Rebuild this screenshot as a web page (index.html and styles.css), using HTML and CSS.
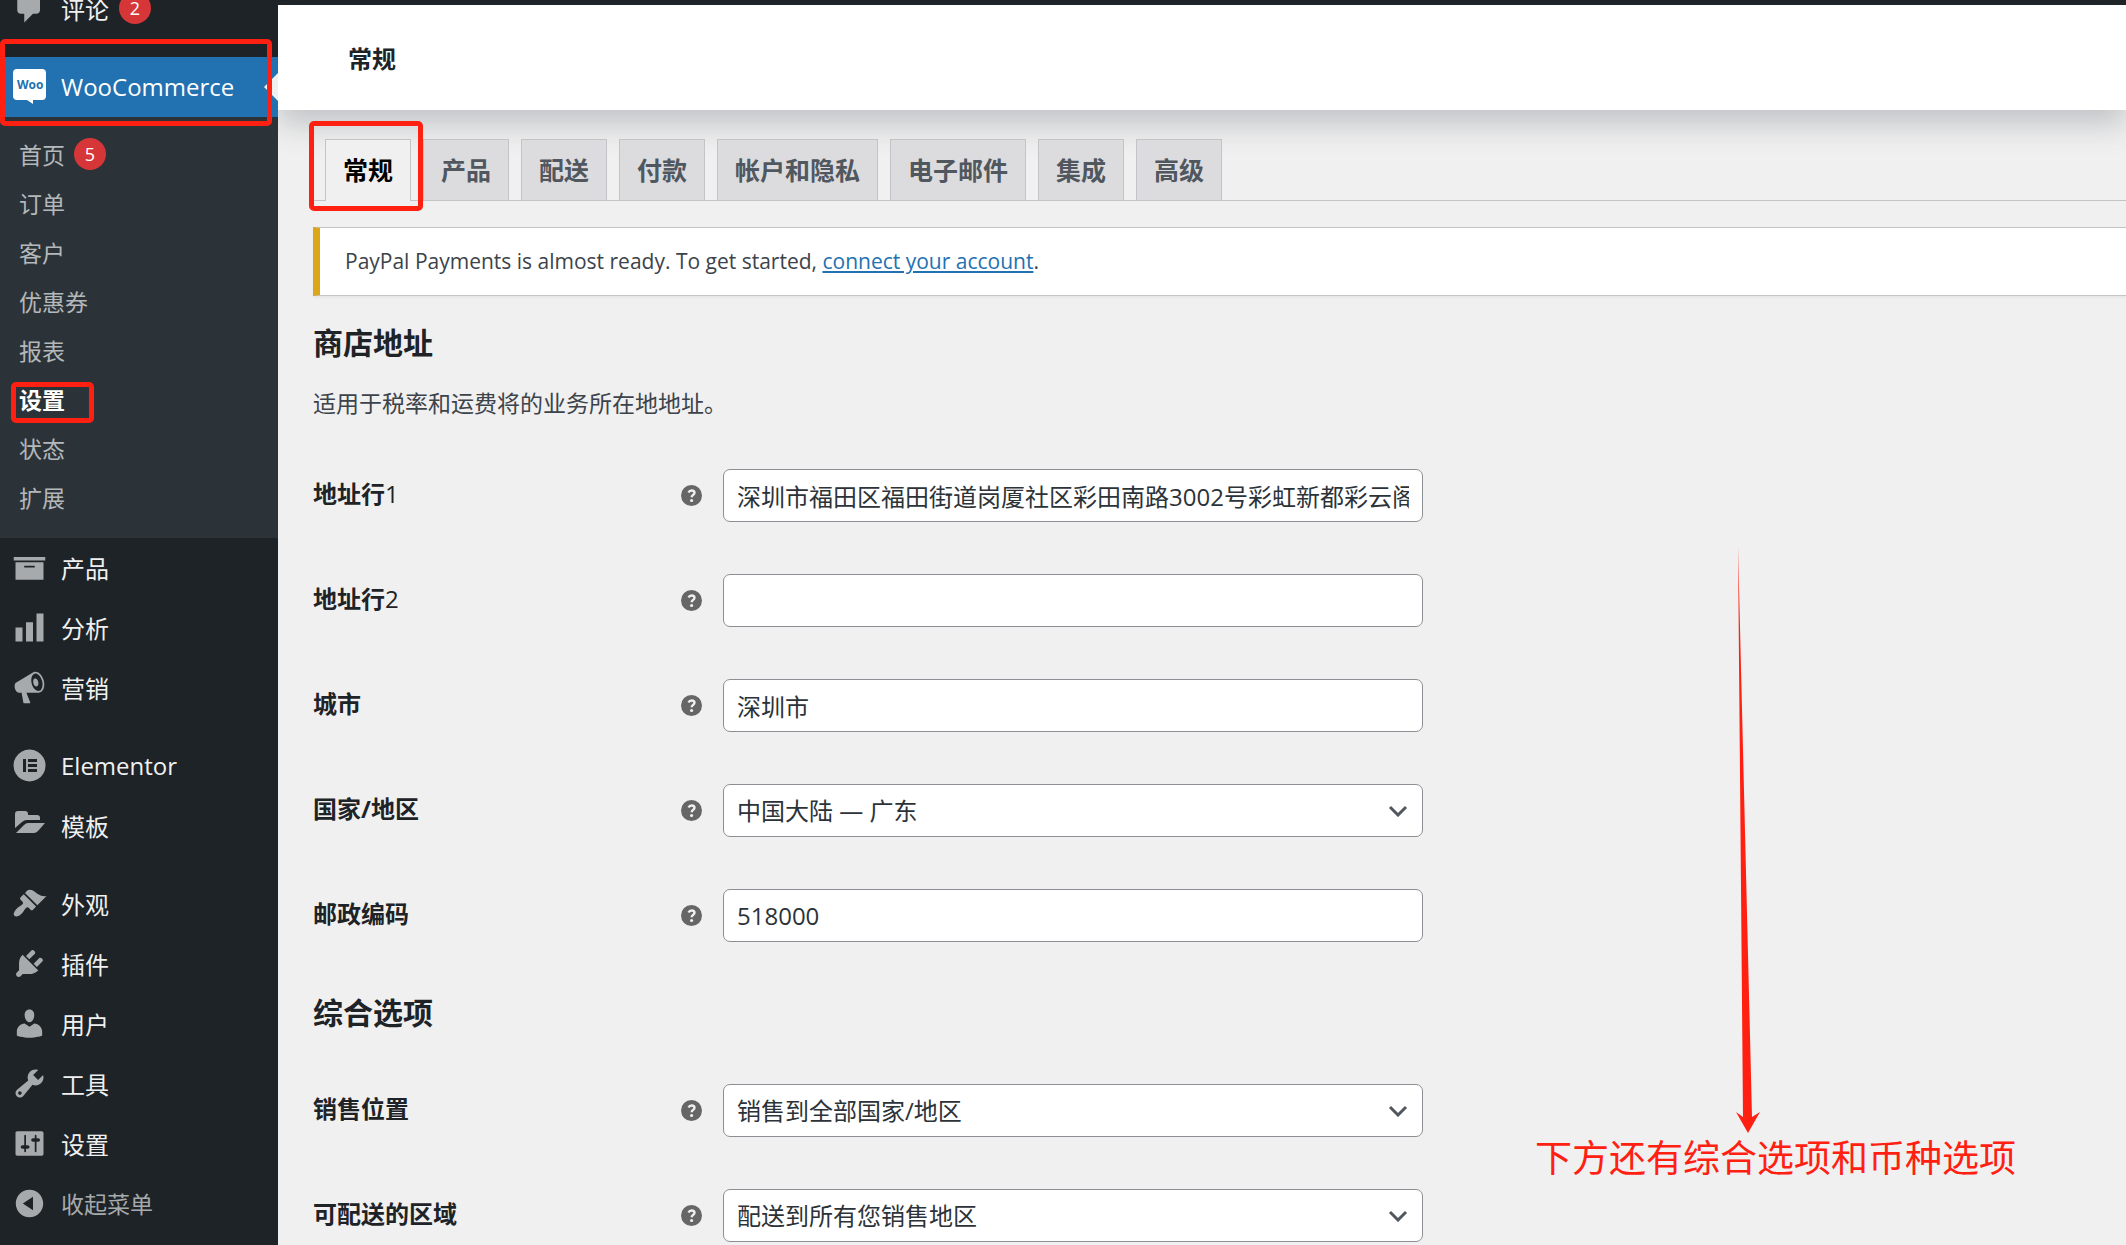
FILE: index.html
```html
<!DOCTYPE html>
<html lang="zh-CN">
<head>
  <meta charset="UTF-8" />
  <title>WooCommerce 设置</title>
  <link rel="stylesheet" href="styles.css">
</head>
<body>
  <nav class="sidebar">
    <ul class="menu">
      <li>
        <a href="#" class="menu-link">
          <svg class="icon" viewBox="0 0 20 20"><path d="M5 2h9q.82 0 1.41.59T16 4v7q0 .82-.59 1.41T14 13h-2l-5 5v-5H5q-.82 0-1.41-.59T3 11V4q0-.82.59-1.41T5 2z"/></svg>
          评论 <span class="badge">2</span>
        </a>
      </li>
      <li class="separator"></li>
      <li class="current">
        <a href="#" class="menu-link">
          <svg class="icon woo" viewBox="0 0 35 35"><path d="M5 0h25q4 0 4 4v23q0 4-4 4h-9v4l-6-4H5q-4 0-4-4V4q0-4 4-4z"/><text x="5" y="20">Woo</text></svg>
          WooCommerce
        </a>
        <span class="mark mark-woo"></span>
        <ul class="submenu">
          <li><a href="#">首页 <span class="badge">5</span></a></li>
          <li><a href="#">订单</a></li>
          <li><a href="#">客户</a></li>
          <li><a href="#">优惠券</a></li>
          <li><a href="#">报表</a></li>
          <li><a href="#" class="active">设置</a><span class="mark mark-settings"></span></li>
          <li><a href="#">状态</a></li>
          <li><a href="#">扩展</a></li>
        </ul>
      </li>
      <li>
        <a href="#" class="menu-link">
          <svg class="icon" viewBox="0 0 20 20"><path d="M19 4v2H1V4h18zM2 7h16v10H2V7zm11 3V9H7v1h6z"/></svg>
          产品
        </a>
      </li>
      <li>
        <a href="#" class="menu-link">
          <svg class="icon" viewBox="0 0 20 20"><path d="M18 18V2h-4v16h4zm-6 0V7H8v11h4zm-6 0v-8H2v8h4z"/></svg>
          分析
        </a>
      </li>
      <li>
        <a href="#" class="menu-link">
          <svg class="icon" viewBox="0 0 20 20"><path d="M18.15 5.94c.46 1.62.38 3.22-.02 4.48-.42 1.28-1.26 2.18-2.3 2.48-.16.06-.26.06-.4.06-.06.02-.12.02-.18.02-.06.02-.14.02-.22.02h-6.8l2.22 5.5c.02.14-.06.26-.14.34-.08.1-.24.16-.34.16H6.95c-.1 0-.26-.06-.34-.16-.08-.08-.16-.2-.14-.34l-1-5.5H4.25l-.02-.02c-.5.06-1.08-.18-1.54-.62s-.88-1.08-1.06-1.88c-.24-.8-.2-1.56-.02-2.2.18-.62.58-1.08 1.06-1.3l.02-.02 9-5.4c.1-.06.18-.1.24-.16.06-.04.14-.08.24-.12.16-.08.28-.12.5-.18 1.04-.3 2.24.1 3.22.98s1.84 2.24 2.26 3.86zm-2.58 5.98h-.02c.4-.1.74-.34 1.04-.7.58-.7.86-1.76.86-3.04 0-.64-.1-1.3-.28-1.98-.34-1.36-1.02-2.5-1.78-3.24s-1.68-1.1-2.46-.88c-.82.22-1.4.96-1.7 2-.32 1.04-.28 2.36.06 3.72.38 1.36 1 2.5 1.8 3.24.78.74 1.62 1.1 2.48.88zm-2.54-7.08c.22-.04.42-.02.62.04.38.16.76.48 1.02 1s.42 1.2.42 1.78c0 .3-.04.56-.12.8-.18.48-.44.84-.86.94-.34.1-.8-.06-1.14-.4s-.64-.86-.78-1.5c-.18-.62-.12-1.24.02-1.72s.48-.84.82-.94z"/></svg>
          营销
        </a>
      </li>
      <li class="separator"></li>
      <li>
        <a href="#" class="menu-link">
          <svg class="icon" viewBox="0 0 35 35"><path fill-rule="evenodd" d="M17.500 1.500a16 16 0 1 0 .1 0zM11 11h3v13h-3zM16 11h9v3h-9zM16 16h9v3h-9zM16 21h9v3h-9z"/></svg>
          Elementor
        </a>
      </li>
      <li>
        <a href="#" class="menu-link">
          <svg class="icon" viewBox="0 0 35 35"><path d="M3 20V6q0-3 3-3h7q3 0 3 3v1h9q3 0 3 3v2H15q-3 0-5 2zM4 25l8-8q2-2 4-2h17l-7 8q-2 2-4 2z"/></svg>
          模板
        </a>
      </li>
      <li class="separator"></li>
      <li>
        <a href="#" class="menu-link">
          <svg class="icon" viewBox="0 0 20 20"><path d="M14.480 11.060L7.410 3.990l1.500-1.500c.5-.56 2.300-.47 3.510.32 1.210.8 1.430 1.280 2.910 2.100 1.180.64 2.450 1.260 4.450.85zm-.71.71L6.700 4.700 4.930 6.470c-.39.39-.39 1.020 0 1.410l1.060 1.060c.39.39.39 1.030 0 1.420-.6.6-1.430 1.110-2.210 1.690-.35.26-.7.53-1.010.84C1.430 14.230.4 16.080 1.400 17.070c.99 1 2.840-.03 4.180-1.360.31-.31.58-.66.85-1.020.57-.78 1.080-1.610 1.690-2.210.39-.39 1.020-.39 1.410 0l1.060 1.060c.39.39 1.020.39 1.410 0z"/></svg>
          外观
        </a>
      </li>
      <li>
        <a href="#" class="menu-link">
          <svg class="icon" viewBox="0 0 20 20"><path d="M13.110 4.360L9.870 7.600 8 5.730l3.240-3.240c.35-.34 1.050-.2 1.560.32.52.51.66 1.210.31 1.550zm-8 1.770l.91-1.120 9.010 9.010-1.190.84c-.71.71-2.630 1.160-3.820 1.160H6.140L4.900 17.260c-.59.59-1.540.59-2.120 0-.59-.58-.59-1.530 0-2.120l1.240-1.240v-3.880c0-1.130.4-3.190 1.090-3.890zm7.260 3.970l3.240-3.240c.34-.35 1.040-.21 1.550.31.52.51.66 1.210.31 1.550l-3.240 3.250z"/></svg>
          插件
        </a>
      </li>
      <li>
        <a href="#" class="menu-link">
          <svg class="icon" viewBox="0 0 20 20"><path d="M10 9.250c-2.270 0-2.730-3.440-2.730-3.440C7 4.020 7.820 2 9.970 2c2.160 0 2.980 2.020 2.710 3.810 0 0-.41 3.440-2.680 3.440zm0 2.570L12.720 10c2.390 0 4.520 2.330 4.520 4.530v2.490s-3.650 1.130-7.240 1.130c-3.650 0-7.240-1.130-7.240-1.130v-2.490c0-2.250 1.940-4.480 4.470-4.480z"/></svg>
          用户
        </a>
      </li>
      <li>
        <a href="#" class="menu-link">
          <svg class="icon" viewBox="0 0 20 20"><path d="M16.680 9.770c-1.340 1.340-3.300 1.670-4.950.99l-5.410 6.520c-.99.99-2.590.99-3.580 0s-.99-2.590 0-3.570l6.520-5.420c-.68-1.650-.35-3.610.99-4.950 1.280-1.280 3.120-1.620 4.720-1.060l-2.890 2.890 2.820 2.820 2.860-2.870c.53 1.580.18 3.390-1.080 4.650zM3.810 16.210c.4.39 1.040.39 1.430 0 .4-.4.4-1.040 0-1.430-.39-.4-1.030-.4-1.430 0-.39.39-.39 1.030 0 1.430z"/></svg>
          工具
        </a>
      </li>
      <li>
        <a href="#" class="menu-link">
          <svg class="icon" viewBox="0 0 20 20"><path d="M18 16V4c0-.55-.45-1-1-1H3c-.55 0-1 .45-1 1v12c0 .55.45 1 1 1h14c.55 0 1-.45 1-1zM8 11h1c.55 0 1 .45 1 1s-.45 1-1 1H8v1.500c0 .28-.22.5-.5.5s-.5-.22-.5-.5V13H6c-.55 0-1-.45-1-1s.45-1 1-1h1V5.500c0-.28.22-.5.5-.5s.5.22.5.5V11zm5-2h-1c-.55 0-1-.45-1-1s.45-1 1-1h1V5.500c0-.28.22-.5.5-.5s.5.22.5.5V7h1c.55 0 1 .45 1 1s-.45 1-1 1h-1v5.500c0 .28-.22.5-.5.5s-.5-.22-.5-.5V9z"/></svg>
          设置
        </a>
      </li>
      <li>
        <button type="button" class="menu-link collapse">
          <svg class="icon" viewBox="0 0 20 20"><path d="M10 2.160c4.330 0 7.840 3.510 7.840 7.840s-3.510 7.840-7.840 7.840S2.160 14.330 2.160 10 5.710 2.160 10 2.160zm2 11.720V6.120L6.180 9.970z"/></svg>
          收起菜单
        </button>
      </li>
    </ul>
  </nav>

  <main class="main">
    <header class="header">
      <h1>常规</h1>
    </header>

    <div class="tabs">
      <a href="#" class="tab tab-active">常规<span class="mark mark-tab"></span></a>
      <a href="#" class="tab">产品</a>
      <a href="#" class="tab">配送</a>
      <a href="#" class="tab">付款</a>
      <a href="#" class="tab">帐户和隐私</a>
      <a href="#" class="tab">电子邮件</a>
      <a href="#" class="tab">集成</a>
      <a href="#" class="tab">高级</a>
    </div>

    <div class="notice">PayPal Payments is almost ready. To get started, <a href="#">connect your account</a>.</div>

    <form class="settings">
      <h2>商店地址</h2>
      <p>适用于税率和运费将的业务所在地地址。</p>

      <div class="row">
        <label for="address1">地址行<span class="num">1</span></label>
        <svg class="help" viewBox="0 0 21 21"><circle cx="10.500" cy="10.500" r="10.500"/><path d="M7.500 7.500q1-2 3.200-2 2.800 0 2.800 2.300 0 1.300-1.500 2.200-1.300.8-1.300 2.200"/><circle class="dot" cx="10.600" cy="15.500" r="1.600"/></svg>
        <input type="text" id="address1" value="深圳市福田区福田街道岗厦社区彩田南路3002号彩虹新都彩云阁">
      </div>
      <div class="row">
        <label for="address2">地址行<span class="num">2</span></label>
        <svg class="help" viewBox="0 0 21 21"><circle cx="10.500" cy="10.500" r="10.500"/><path d="M7.500 7.500q1-2 3.200-2 2.800 0 2.800 2.300 0 1.300-1.500 2.200-1.300.8-1.300 2.200"/><circle class="dot" cx="10.600" cy="15.500" r="1.600"/></svg>
        <input type="text" id="address2">
      </div>
      <div class="row">
        <label for="city">城市</label>
        <svg class="help" viewBox="0 0 21 21"><circle cx="10.500" cy="10.500" r="10.500"/><path d="M7.500 7.500q1-2 3.200-2 2.800 0 2.800 2.300 0 1.300-1.500 2.200-1.300.8-1.300 2.200"/><circle class="dot" cx="10.600" cy="15.500" r="1.600"/></svg>
        <input type="text" id="city" value="深圳市">
      </div>
      <div class="row">
        <label for="country">国家/地区</label>
        <svg class="help" viewBox="0 0 21 21"><circle cx="10.500" cy="10.500" r="10.500"/><path d="M7.500 7.500q1-2 3.200-2 2.800 0 2.800 2.300 0 1.300-1.500 2.200-1.300.8-1.300 2.200"/><circle class="dot" cx="10.600" cy="15.500" r="1.600"/></svg>
        <div class="select">
          <select id="country"><option>中国大陆 — 广东</option></select>
          <svg class="chevron" viewBox="0 0 20 12"><path d="M2 2l8 8 8-8"/></svg>
        </div>
      </div>
      <div class="row">
        <label for="postcode">邮政编码</label>
        <svg class="help" viewBox="0 0 21 21"><circle cx="10.500" cy="10.500" r="10.500"/><path d="M7.500 7.500q1-2 3.200-2 2.800 0 2.800 2.300 0 1.300-1.500 2.200-1.300.8-1.300 2.200"/><circle class="dot" cx="10.600" cy="15.500" r="1.600"/></svg>
        <input type="text" id="postcode" value="518000">
      </div>

      <h2>综合选项</h2>
      <div class="row">
        <label for="selling">销售位置</label>
        <svg class="help" viewBox="0 0 21 21"><circle cx="10.500" cy="10.500" r="10.500"/><path d="M7.500 7.500q1-2 3.200-2 2.800 0 2.800 2.300 0 1.300-1.500 2.200-1.300.8-1.300 2.200"/><circle class="dot" cx="10.600" cy="15.500" r="1.600"/></svg>
        <div class="select">
          <select id="selling"><option>销售到全部国家/地区</option></select>
          <svg class="chevron" viewBox="0 0 20 12"><path d="M2 2l8 8 8-8"/></svg>
        </div>
      </div>
      <div class="row">
        <label for="shipping">可配送的区域</label>
        <svg class="help" viewBox="0 0 21 21"><circle cx="10.500" cy="10.500" r="10.500"/><path d="M7.500 7.500q1-2 3.200-2 2.800 0 2.800 2.300 0 1.300-1.500 2.200-1.300.8-1.300 2.200"/><circle class="dot" cx="10.600" cy="15.500" r="1.600"/></svg>
        <div class="select">
          <select id="shipping"><option>配送到所有您销售地区</option></select>
          <svg class="chevron" viewBox="0 0 20 12"><path d="M2 2l8 8 8-8"/></svg>
        </div>
      </div>
    </form>

    <div class="note">
      <svg class="arrow" viewBox="0 0 24 587"><path d="M2 0L16 571l8-5-12 21L0 566l7 5z"/></svg>
      <span>下方还有综合选项和币种选项</span>
    </div>
  </main>
</body>
</html>
```

FILE: styles.css
```css
* {
  box-sizing: border-box;
}
body {
  margin: 0;
  display: flex;
  height: 100vh;
  overflow: hidden;
  background: #f0f0f0;
  color: #3c434a;
  font-family: 'Open Sans', 'Noto Sans CJK SC', sans-serif;
  font-size: 23px;
}
ul {
  list-style: none;
  margin: 0;
  padding: 0;
}

/* sidebar */
.sidebar {
  flex: none;
  width: 278px;
  background: #1d2327;
  overflow: hidden;
  position: relative;
  z-index: 2;
}
.menu {
  margin-top: -21px;
}
.menu-link {
  display: flex;
  align-items: center;
  gap: 14px;
  width: 100%;
  height: 60px;
  padding: 0 12px 2px;
  color: #f0f0f1;
  font-size: 24px;
  text-decoration: none;
}
.icon {
  flex: none;
  width: 35px;
  height: 35px;
  fill: #a7aaad;
}
.separator {
  height: 18px;
}
.badge {
  display: inline-flex;
  align-items: center;
  justify-content: center;
  width: 32px;
  height: 32px;
  border-radius: 50%;
  background: #d63638;
  color: #fff;
  font-size: 18px;
}
.menu-link .badge {
  margin-left: -4px;
}
.current {
  position: relative;
}
.current .menu-link {
  background: #2271b1;
  color: #fff;
}
.current .menu-link::after {
  content: "";
  position: absolute;
  right: 0;
  top: 16px;
  border: 14px solid transparent;
  border-left: 0;
  border-right-color: #f0f0f0;
}
.woo {
  fill: #fff;
}
.woo text {
  fill: #2271b1;
  font-size: 12px;
  font-weight: 700;
}
.submenu {
  padding: 12px 0 17px;
  background: #2c3338;
}
.submenu li {
  position: relative;
}
.submenu a {
  display: flex;
  align-items: center;
  gap: 9px;
  height: 49px;
  padding: 0 19px;
  color: #b4b8bb;
  font-size: 23px;
  text-decoration: none;
}
.submenu .active {
  color: #fff;
  font-weight: 700;
}
.collapse {
  border: 0;
  background: none;
  color: #a7aaad;
  font-family: inherit;
  font-size: 23px;
}

/* red highlight frames */
.mark {
  position: absolute;
  border: 5px solid #ff2012;
  border-radius: 5px;
  pointer-events: none;
}
.mark-woo {
  left: 0;
  right: 6px;
  top: -18px;
  height: 87px;
}
.mark-settings {
  left: 11px;
  top: 8px;
  width: 83px;
  height: 41px;
}
.mark-tab {
  left: -17px;
  right: -13px;
  top: -19px;
  bottom: -10px;
}

/* main area */
.main {
  flex: 1;
  min-width: 0;
  position: relative;
  border-top: 5px solid #1d2327;
}
.header {
  display: flex;
  align-items: center;
  height: 105px;
  padding-left: 70px;
  background: #fff;
  box-shadow: 0 14px 28px rgba(85, 93, 102, 0.3);
}
h1 {
  margin: 0;
  color: #1d2327;
  font-size: 24px;
  font-weight: 600;
}
.tabs {
  display: flex;
  gap: 12px;
  margin: 29px 0 26px 35px;
  padding-left: 12px;
  border-bottom: 1px solid #c3c4c7;
}
.tab {
  position: relative;
  height: 61px;
  padding: 0 17px;
  border: 1px solid #c3c4c7;
  border-bottom: 0;
  background: #dcdcde;
  color: #50575e;
  font-size: 25px;
  font-weight: 700;
  line-height: 60px;
  text-decoration: none;
}
.tab-active {
  height: 62px;
  margin-bottom: -1px;
  background: #f0f0f0;
  color: #000;
}
.notice {
  margin: 0 0 27px 35px;
  padding: 0 25px;
  border: 1px solid #c3c4c7;
  border-left: 7px solid #dba617;
  border-right: 0;
  background: #fff;
  box-shadow: 0 2px 2px rgba(0, 0, 0, 0.04);
  font-size: 21px;
  line-height: 67px;
}
.notice a {
  color: #2271b1;
}

/* settings form */
.settings {
  padding-left: 35px;
}
h2 {
  margin: 25px 0;
  color: #1d2327;
  font-size: 30px;
  font-weight: 700;
  line-height: 40px;
}
p {
  margin: 25px 0;
  line-height: 30px;
}
.row {
  display: grid;
  grid-template-columns: 368px 42px minmax(0, 700px);
  align-items: center;
  height: 105px;
}
label {
  padding-bottom: 6px;
  color: #1d2327;
  font-size: 24px;
  font-weight: 700;
}
.num {
  font-weight: 400;
}
.help {
  width: 21px;
  height: 21px;
  fill: #666;
}
.help path {
  fill: none;
  stroke: #f0f0f0;
  stroke-width: 2.4;
}
.help .dot {
  fill: #f0f0f0;
}
input, select {
  width: 100%;
  height: 53px;
  padding: 0 13px;
  border: 1px solid #8c8f94;
  border-radius: 7px;
  background: #fff;
  color: #2c3338;
  font-family: inherit;
  font-size: 24px;
}
select {
  appearance: none;
}
.select {
  position: relative;
}
.chevron {
  position: absolute;
  right: 15px;
  top: 21px;
  width: 20px;
  height: 12px;
  fill: none;
  stroke: #50575e;
  stroke-width: 3;
  pointer-events: none;
}

/* arrow and remark over the page */
.note {
  position: absolute;
  left: 1257px;
  top: 541px;
  display: flex;
  flex-direction: column;
  color: #ff2012;
  font-size: 37px;
  line-height: 50px;
  white-space: nowrap;
}
.arrow {
  width: 24px;
  height: 587px;
  margin-left: 201px;
  fill: #ff2012;
}
```
